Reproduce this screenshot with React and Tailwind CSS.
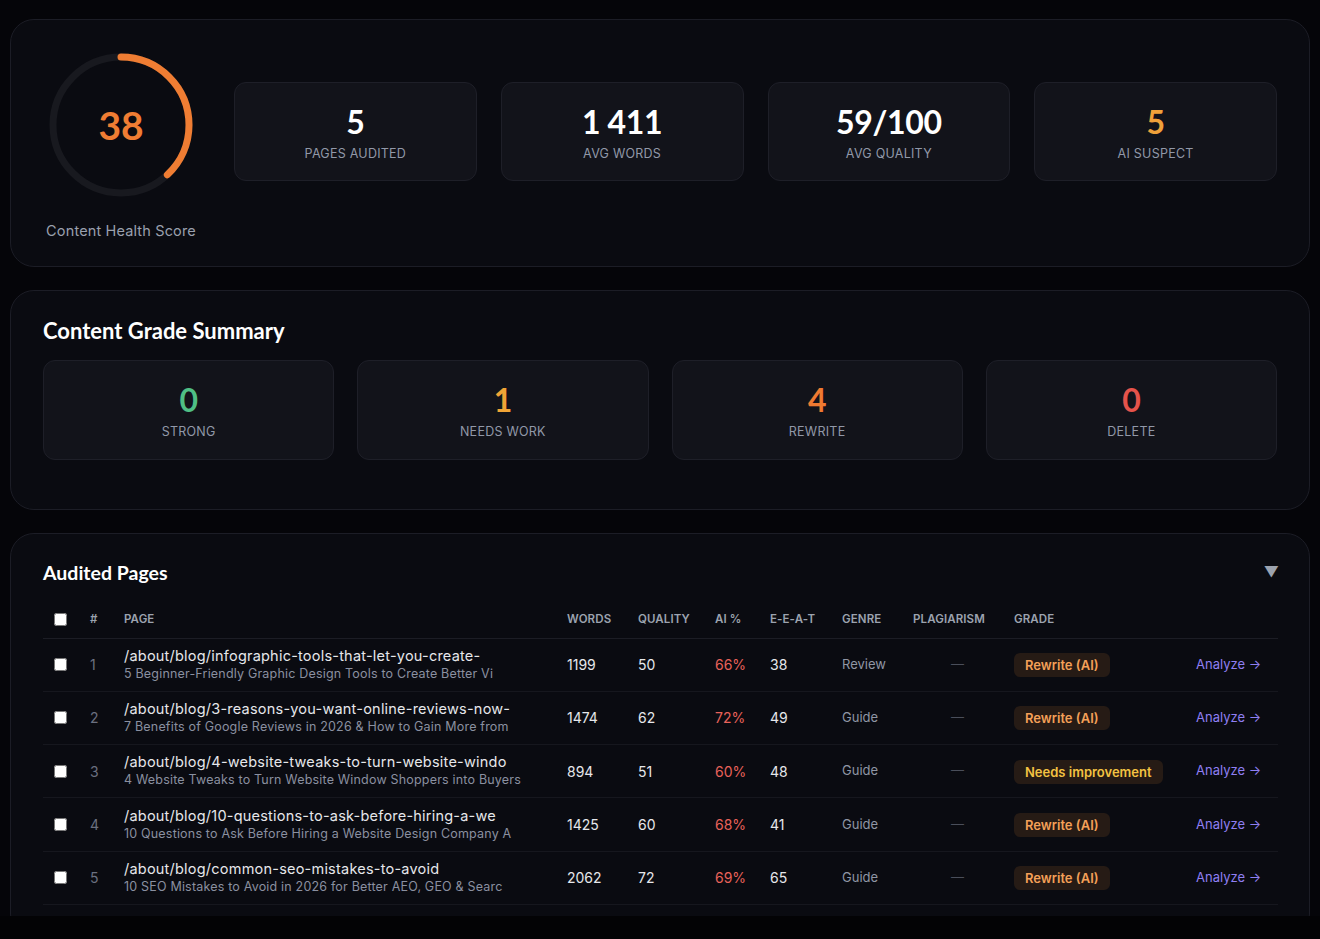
import React from "react";

const stats = [
  { value: "5", label: "PAGES AUDITED", color: "text-white" },
  { value: "1 411", label: "AVG WORDS", color: "text-white" },
  { value: "59/100", label: "AVG QUALITY", color: "text-white" },
  { value: "5", label: "AI SUSPECT", color: "text-[#f0a13a]" },
];

const grades = [
  { value: "0", label: "STRONG", color: "text-[#4fbf85]" },
  { value: "1", label: "NEEDS WORK", color: "text-[#f0a436]" },
  { value: "4", label: "REWRITE", color: "text-[#ef7a31]" },
  { value: "0", label: "DELETE", color: "text-[#e5534b]" },
];

const rows = [
  {
    path: "/about/blog/infographic-tools-that-let-you-create-",
    title: "5 Beginner-Friendly Graphic Design Tools to Create Better Vi",
    words: "1199",
    quality: "50",
    ai: "66%",
    eeat: "38",
    genre: "Review",
    grade: "Rewrite (AI)",
  },
  {
    path: "/about/blog/3-reasons-you-want-online-reviews-now-",
    title: "7 Benefits of Google Reviews in 2026 & How to Gain More from",
    words: "1474",
    quality: "62",
    ai: "72%",
    eeat: "49",
    genre: "Guide",
    grade: "Rewrite (AI)",
  },
  {
    path: "/about/blog/4-website-tweaks-to-turn-website-windo",
    title: "4 Website Tweaks to Turn Website Window Shoppers into Buyers",
    words: "894",
    quality: "51",
    ai: "60%",
    eeat: "48",
    genre: "Guide",
    grade: "Needs improvement",
  },
  {
    path: "/about/blog/10-questions-to-ask-before-hiring-a-we",
    title: "10 Questions to Ask Before Hiring a Website Design Company A",
    words: "1425",
    quality: "60",
    ai: "68%",
    eeat: "41",
    genre: "Guide",
    grade: "Rewrite (AI)",
  },
  {
    path: "/about/blog/common-seo-mistakes-to-avoid",
    title: "10 SEO Mistakes to Avoid in 2026 for Better AEO, GEO & Searc",
    words: "2062",
    quality: "72",
    ai: "69%",
    eeat: "65",
    genre: "Guide",
    grade: "Rewrite (AI)",
  },
];

function Ring() {
  const r = 68;
  const c = 2 * Math.PI * r;
  const pct = 0.38;
  return (
    <div className="relative w-[144px] h-[144px]">
      <svg width="144" height="144" viewBox="0 0 144 144">
        <circle cx="72" cy="72" r={r} fill="none" stroke="#18191f" strokeWidth="7" />
        <circle
          cx="72"
          cy="72"
          r={r}
          fill="none"
          stroke="#ef7d33"
          strokeWidth="7"
          strokeLinecap="round"
          strokeDasharray={`${c * pct} ${c}`}
          transform="rotate(-90 72 72)"
        />
      </svg>
      <div className="absolute inset-0 flex items-center justify-center">
        <span className="font-['Lato',sans-serif] font-bold text-[39px] leading-none text-[#ef7d33]">38</span>
      </div>
    </div>
  );
}

function Tile({ value, label, color, h }) {
  return (
    <div className={`${h} rounded-xl border border-[#1e1f28] bg-[#12131a] pt-[21px] flex flex-col items-center`}>
      <div className={`font-['Lato',sans-serif] font-bold text-[32px] leading-[36px] tracking-[-0.01em] ${color}`}>{value}</div>
      <div className="mt-[6px] text-[12.5px] leading-[16px] tracking-[0.02em] text-[#9198a8]">{label}</div>
    </div>
  );
}

function Badge({ text }) {
  const needs = text === "Needs improvement";
  return (
    <span
      className={`inline-block rounded-md bg-[#261b15] px-[11px] py-[3px] text-[13px] leading-[18px] font-semibold ${
        needs ? "text-[#f3c242]" : "text-[#f4a058]"
      }`}
    >
      {text}
    </span>
  );
}

export default function App() {
  return (
    <div className="min-h-[939px] bg-[#030305] font-['Inter',sans-serif]">
      <div className="h-[916px] overflow-hidden bg-[#050509] px-[10px] pt-[19px]">
        {/* Card 1 */}
        <section className="rounded-3xl border border-[#1c1d26] bg-[#0a0b11] pl-8 pr-8 pt-[33px] pb-[25px] flex">
          <div className="w-[156px] flex flex-col items-center">
            <Ring />
            <div className="mt-[24px] text-[14.5px] leading-[20px] tracking-[0.01em] text-[#9aa0ae] whitespace-nowrap">
              Content Health Score
            </div>
          </div>
          <div className="ml-[35px] mt-[29px] flex-1 grid grid-cols-4 gap-6 self-start">
            {stats.map((s) => (
              <Tile key={s.label} {...s} h="h-[99px]" />
            ))}
          </div>
        </section>

        {/* Card 2 */}
        <section className="mt-[23px] rounded-3xl border border-[#1c1d26] bg-[#0a0b11] px-8 pt-[26px] pb-[49px]">
          <h2 className="font-['Lato',sans-serif] font-bold text-[22px] leading-[28px] text-white">Content Grade Summary</h2>
          <div className="mt-[15px] grid grid-cols-4 gap-[23px]">
            {grades.map((g) => (
              <Tile key={g.label} {...g} h="h-[100px]" />
            ))}
          </div>
        </section>

        {/* Card 3 */}
        <section className="mt-[23px] rounded-3xl border border-[#1c1d26] bg-[#0a0b11] px-8 pt-[25px] pb-8">
          <div className="flex items-center justify-between">
            <h2 className="font-['Lato',sans-serif] font-bold text-[19.5px] leading-[28px] text-white">Audited Pages</h2>
            <span className="-mt-[4px] -mr-[2px] text-[15px] leading-none text-[#9ca3af]">▼</span>
          </div>
          <table className="mt-[14px] w-full table-fixed border-collapse">
            <colgroup>
              <col className="w-[35px]" />
              <col className="w-[34px]" />
              <col className="w-[443px]" />
              <col className="w-[71px]" />
              <col className="w-[77px]" />
              <col className="w-[55px]" />
              <col className="w-[72px]" />
              <col className="w-[71px]" />
              <col className="w-[101px]" />
              <col className="w-[182px]" />
              <col className="w-[94px]" />
            </colgroup>
            <thead>
              <tr className="h-[37px] border-b border-[#1c1d25] text-left text-[11.5px] tracking-[0.01em] text-[#9ca3af]">
                <th className="pl-[11px] font-semibold">
                  <input type="checkbox" className="block w-[13px] h-[13px]" />
                </th>
                <th className="pl-3 font-semibold">#</th>
                <th className="pl-3 font-semibold">PAGE</th>
                <th className="pl-3 font-semibold">WORDS</th>
                <th className="pl-3 font-semibold">QUALITY</th>
                <th className="pl-3 font-semibold">AI %</th>
                <th className="pl-3 font-semibold">E-E-A-T</th>
                <th className="pl-3 font-semibold">GENRE</th>
                <th className="pl-3 font-semibold">PLAGIARISM</th>
                <th className="pl-3 font-semibold">GRADE</th>
                <th></th>
              </tr>
            </thead>
            <tbody>
              {rows.map((r, i) => (
                <tr key={i} className="h-[53.3px] border-b border-[#16171e] align-middle">
                  <td className="pl-[11px]">
                    <input type="checkbox" className="block w-[13px] h-[13px]" />
                  </td>
                  <td className="pl-3 text-[14px] text-[#6b7080]">{i + 1}</td>
                  <td className="pl-3">
                    <div className="text-[14.5px] leading-[18px] tracking-[0.015em] text-[#e6e7eb] whitespace-nowrap">{r.path}</div>
                    <div className="text-[12.5px] leading-[18px] tracking-[0.015em] text-[#8a90a0] whitespace-nowrap">{r.title}</div>
                  </td>
                  <td className="pl-3 text-[14px] text-[#e6e7eb]">{r.words}</td>
                  <td className="pl-3 text-[14px] text-[#e6e7eb]">{r.quality}</td>
                  <td className="pl-3 text-[14px] text-[#e8625a]">{r.ai}</td>
                  <td className="pl-3 text-[14px] text-[#e6e7eb]">{r.eeat}</td>
                  <td className="pl-3 text-[13px] text-[#9096a4]">{r.genre}</td>
                  <td className="pl-3 text-center text-[13px] text-[#4a4e5a]">—</td>
                  <td className="pl-3">
                    <Badge text={r.grade} />
                  </td>
                  <td className="pl-3 text-[13px] text-[#8f7ff3] whitespace-nowrap">Analyze →</td>
                </tr>
              ))}
            </tbody>
          </table>
        </section>
      </div>
    </div>
  );
}
